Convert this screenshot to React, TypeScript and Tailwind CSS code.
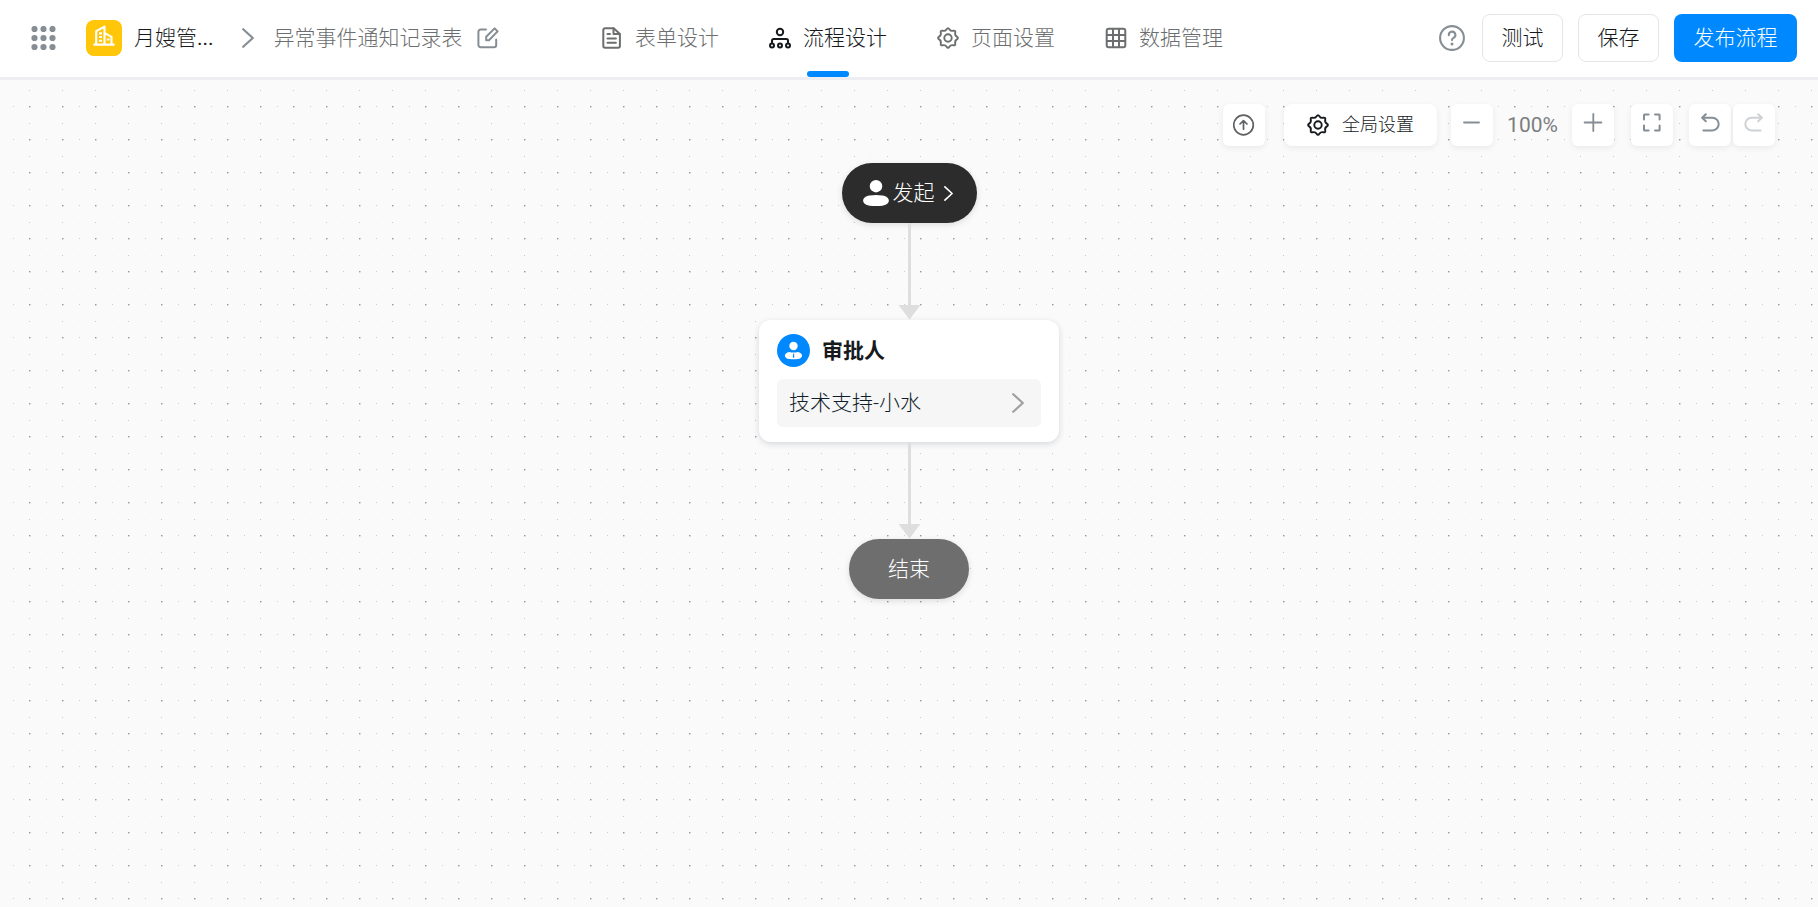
import React from 'react';

interface IconProps {
  className?: string;
}

const strokeProps = {
  fill: 'none',
  stroke: 'currentColor',
  strokeLinecap: 'round' as const,
  strokeLinejoin: 'round' as const,
};

// Eight-tooth gear outline: smooth curve through alternating outer and inner radii
function buildGearPath(center: number, outer: number, inner: number) {
  const points = Array.from({ length: 16 }, (_, i) => {
    const angle = (i * Math.PI) / 8;
    const radius = i % 2 === 0 ? outer : inner;
    return [center + radius * Math.sin(angle), center - radius * Math.cos(angle)];
  });
  const middles = points.map(([x, y], i) => {
    const [nextX, nextY] = points[(i + 1) % points.length];
    return `${((x + nextX) / 2).toFixed(2)} ${((y + nextY) / 2).toFixed(2)}`;
  });
  const curves = points.map(([x, y], i) => `Q${x.toFixed(2)} ${y.toFixed(2)} ${middles[i]}`);
  return `M${middles[15]}${curves.join('')}Z`;
}

const GEAR_PATH = buildGearPath(11, 11, 7.2);

function AppsIcon({ className }: IconProps) {
  const points = [3.5, 12.5, 21.5];
  return (
    <svg viewBox="0 0 25 25" className={className} fill="currentColor">
      {points.map((y) => points.map((x) => <circle key={`${x}-${y}`} cx={x} cy={y - 0.5} r="3.1" />))}
    </svg>
  );
}

function BuildingIcon({ className }: IconProps) {
  return (
    <svg viewBox="0 0 22 22" className={className} {...strokeProps} strokeWidth="2.1">
      <path d="M1.2 19.6H20.8M3.2 19.6V6.2L11.5 1.6V19.6M11.8 8.2L18.5 11.8V19.6" />
      <path d="M6 8.4H9M6 12H9M6 15.8H9M13.8 14.5H16.6" strokeLinecap="butt" />
    </svg>
  );
}

function EditIcon({ className }: IconProps) {
  return (
    <svg viewBox="0 0 22 22" className={className} {...strokeProps} strokeWidth="2">
      <path d="M9 2.6H3.6A2.2 2.2 0 0 0 1.4 4.8V18A2.2 2.2 0 0 0 3.6 20.2H17A2.2 2.2 0 0 0 19.2 18V12.5" />
      <path d="M9.2 13.2V9.8L17.6 1.4L20.6 4.4L12 13.2Z" />
    </svg>
  );
}

function FormIcon({ className }: IconProps) {
  return (
    <svg viewBox="0 0 21 22" className={className} {...strokeProps} strokeWidth="2">
      <path d="M3.6 1.2H12.2L18.4 7V19A1.8 1.8 0 0 1 16.6 20.8H3.6A1.8 1.8 0 0 1 1.8 19V3A1.8 1.8 0 0 1 3.6 1.2Z" />
      <path d="M12 1.5V7H18" />
      <path d="M6 7H8.5M6 11.5H14.4M6 15.8H14.4" />
    </svg>
  );
}

function FlowIcon({ className }: IconProps) {
  return (
    <svg viewBox="0 0 22 22" className={className} {...strokeProps} strokeWidth="2">
      <circle cx="11" cy="5" r="3.2" />
      <circle cx="3" cy="18.4" r="2" />
      <circle cx="11" cy="18.4" r="2" />
      <circle cx="19" cy="18.4" r="2" />
      <path d="M3 15.6V13.6A1.6 1.6 0 0 1 4.6 12H17.4A1.6 1.6 0 0 1 19 13.6V15.6" />
    </svg>
  );
}

function GearIcon({ className }: IconProps) {
  return (
    <svg viewBox="0 0 22 22" className={className} {...strokeProps} strokeWidth="1.9">
      <path d={GEAR_PATH} />
      <circle cx="11" cy="11" r="3.7" />
    </svg>
  );
}

function TableIcon({ className }: IconProps) {
  return (
    <svg viewBox="0 0 22 22" className={className} {...strokeProps} strokeWidth="2">
      <rect x="1.7" y="1.7" width="18.6" height="18.6" rx="2" />
      <path d="M8 2V20M14 2V20M2 8H20M2 14H20" />
    </svg>
  );
}

function HelpIcon({ className }: IconProps) {
  return (
    <svg viewBox="0 0 26 26" className={className} {...strokeProps} strokeWidth="2.1">
      <circle cx="13" cy="13" r="11.9" />
      <path d="M9.8 10.2A3.3 3.3 0 1 1 14.6 12.9C13.5 13.5 13 14 13 15.1" />
      <circle cx="13" cy="19" r="1.5" fill="currentColor" stroke="none" />
    </svg>
  );
}

function ChevronIcon({ className }: IconProps) {
  return (
    <svg viewBox="0 0 12 20" className={className} {...strokeProps} strokeWidth="2.2">
      <path d="M1.2 1.2L10.8 10L1.2 18.8" />
    </svg>
  );
}

function UploadIcon({ className }: IconProps) {
  return (
    <svg viewBox="0 0 22 22" className={className} {...strokeProps} strokeWidth="1.7">
      <circle cx="10.5" cy="11" r="9.8" />
      <path d="M10.5 15.2V7M7 10L10.5 6.6L14 10" />
    </svg>
  );
}

function MinusIcon({ className }: IconProps) {
  return (
    <svg viewBox="0 0 20 20" className={className} {...strokeProps} strokeWidth="1.8">
      <path d="M2 9.5H17" />
    </svg>
  );
}

function PlusIcon({ className }: IconProps) {
  return (
    <svg viewBox="0 0 20 20" className={className} {...strokeProps} strokeWidth="1.8">
      <path d="M1.6 9.5H18.4M10.3 1V18" />
    </svg>
  );
}

function FullscreenIcon({ className }: IconProps) {
  return (
    <svg viewBox="0 0 20 20" className={className} {...strokeProps} strokeWidth="2">
      <path d="M2 6.6V2.2Q2 1.6 2.6 1.6H6.6M13 1.6H17Q17.6 1.6 17.6 2.2V6.6M17.6 12.6V17Q17.6 17.6 17 17.6H13M6.6 17.6H2.6Q2 17.6 2 17V12.6" />
    </svg>
  );
}

function UndoIcon({ className }: IconProps) {
  return (
    <svg viewBox="0 0 20 20" className={className} {...strokeProps} strokeWidth="2">
      <path d="M5.8 1.2L2.2 4.8L5.8 8.2" />
      <path d="M2.6 4.8H12.4A6.3 6.3 0 0 1 12.4 17.4H3.4" />
    </svg>
  );
}

function UserIcon({ className }: IconProps) {
  return (
    <svg viewBox="0 0 26 26" className={className} fill="currentColor">
      <circle cx="13" cy="6.2" r="6.2" />
      <path d="M6.5 15.4Q13 14.4 19.5 15.4C28 16.6 28 24.6 19.5 25.7Q13 26.3 6.5 25.7C-2 24.6 -2 16.6 6.5 15.4Z" />
    </svg>
  );
}

function ApproverIcon({ className }: IconProps) {
  return (
    <svg viewBox="0 0 33 33" className={className}>
      <circle cx="16.5" cy="16.5" r="16.5" fill="#0089ff" />
      <circle cx="16.5" cy="12" r="4.2" fill="#fff" />
      <path d="M12.3 17.9Q16.5 19.2 20.7 17.9C26.6 18.8 26.6 24.3 20.7 25Q16.5 25.5 12.3 25C6.4 24.3 6.4 18.8 12.3 17.9Z" fill="#fff" />
      <path d="M15.8 19.8H17.4L17 21L17.4 23L16.6 24L15.8 23L16.2 21Z" fill="#0089ff" />
    </svg>
  );
}

function DotGrid() {
  return (
    <svg className="absolute inset-0 h-full w-full" aria-hidden="true">
      <defs>
        <pattern id="dots" width="33" height="33" patternUnits="userSpaceOnUse">
          <rect x="29" y="26" width="1" height="1" fill="#9497ab" />
          <rect x="30" y="26" width="1" height="1" fill="#c9cad6" />
          <rect x="29" y="27" width="1" height="1" fill="#d2d3dc" />
          <rect x="30" y="27" width="1" height="1" fill="#e8e9ef" />
          <rect x="13" y="26" width="1" height="1" fill="#cdced4" />
          <rect x="29" y="10" width="1" height="1" fill="#c6c7cd" />
          <rect x="13" y="10" width="1" height="1" fill="#f0f0f2" />
        </pattern>
      </defs>
      <rect width="100%" height="100%" fill="url(#dots)" />
    </svg>
  );
}

function Arrow() {
  return (
    <svg viewBox="0 0 24 97" className="h-[97px] w-6" fill="#dedede">
      <rect x="11" y="0" width="3" height="84" />
      <path d="M1.5 82H23.5L12.5 96.5Z" />
    </svg>
  );
}

interface ToolButtonProps {
  label: string;
  disabled?: boolean;
  className?: string;
  children: React.ReactNode;
}

function ToolButton({ label, disabled, className = '', children }: ToolButtonProps) {
  return (
    <button
      type="button"
      aria-label={label}
      disabled={disabled}
      className={`flex size-[42px] items-center justify-center rounded-md bg-white shadow-[0_2px_6px_rgba(0,0,0,0.07)] ${className}`}
    >
      {children}
    </button>
  );
}

const tabs = [
  { label: '表单设计', icon: FormIcon },
  { label: '流程设计', icon: FlowIcon, active: true },
  { label: '页面设置', icon: GearIcon },
  { label: '数据管理', icon: TableIcon },
];

function Header() {
  return (
    <header className="grid h-20 grid-cols-[1fr_auto_1fr] items-center border-b-3 border-[#ededf2] bg-white pr-[21px] pl-[31px]">
      <div className="flex items-center pb-px whitespace-nowrap">
        <button type="button" aria-label="应用" className="text-[#868e95]">
          <AppsIcon className="size-[25px]" />
        </button>
        <span className="ml-[30px] flex size-9 items-center justify-center rounded-lg bg-[#ffc60a] pb-1 text-white">
          <BuildingIcon className="size-[22px]" />
        </span>
        <a href="#" className="ml-3 text-[#171a1d]">
          月嫂管<span className="font-normal">...</span>
        </a>
        <ChevronIcon className="ml-7 h-5 w-3 text-[#868e95]" />
        <span className="ml-5 text-[#6c6e6f]">异常事件通知记录表</span>
        <button type="button" aria-label="编辑" className="ml-[14px] text-[#868e95]">
          <EditIcon className="size-[22px]" />
        </button>
      </div>

      <nav className="flex h-full gap-[50px] pr-1">
        {tabs.map(({ label, icon: Icon, active }) => (
          <a
            key={label}
            href="#"
            className={`relative flex items-center gap-3 pb-px whitespace-nowrap ${active ? 'text-[#171a1d]' : 'text-[#6c6e6f]'}`}
          >
            <Icon className="size-[22px]" />
            {label}
            {active && (
              <span className="absolute bottom-0 left-1/2 h-[6px] w-[42px] -translate-x-1/2 rounded-full bg-[#0089ff]" />
            )}
          </a>
        ))}
      </nav>

      <div className="flex items-center justify-end pb-px whitespace-nowrap">
        <button type="button" aria-label="帮助" className="mr-[17px] text-[#868e95]">
          <HelpIcon className="size-[26px]" />
        </button>
        <div className="flex gap-[15px]">
          <button type="button" className="h-12 w-[81px] rounded-lg border border-[#e5e6e8] text-[#171a1d]">测试</button>
          <button type="button" className="h-12 w-[81px] rounded-lg border border-[#e5e6e8] text-[#171a1d]">保存</button>
          <button type="button" className="h-12 w-[123px] rounded-lg bg-[#0089ff] text-white">发布流程</button>
        </div>
      </div>
    </header>
  );
}

function Toolbar() {
  return (
    <div className="flex items-center justify-end pr-[43px]">
      <ToolButton label="上传" className="text-[#5f6163]">
        <UploadIcon className="size-[22px]" />
      </ToolButton>
      <button
        type="button"
        className="mr-[14px] ml-[19px] flex h-[42px] w-[153px] items-center justify-center gap-[13px] rounded-lg bg-white text-lg text-[#171a1d] shadow-[0_2px_6px_rgba(0,0,0,0.07)]"
      >
        <GearIcon className="size-[22px]" />
        全局设置
      </button>
      <ToolButton label="缩小" className="pb-1 text-[#868e95]">
        <MinusIcon className="size-5" />
      </ToolButton>
      <span className="w-[79px] text-center font-normal text-[#7c7e80]">100%</span>
      <ToolButton label="放大" className="pb-1 text-[#868e95]">
        <PlusIcon className="size-5" />
      </ToolButton>
      <ToolButton label="全屏" className="ml-[17px] pb-1 text-[#868e95]">
        <FullscreenIcon className="size-5" />
      </ToolButton>
      <div className="ml-4 flex gap-[2px]">
        <ToolButton label="撤销" className="pb-1 text-[#868e95]">
          <UndoIcon className="size-5" />
        </ToolButton>
        <ToolButton label="重做" disabled className="pb-1 text-[#868e95]">
          <UndoIcon className="size-5 -scale-x-100 opacity-40" />
        </ToolButton>
      </div>
    </div>
  );
}

function Flow() {
  return (
    <div className="mt-[17px] flex flex-col items-center">
      <button
        type="button"
        className="flex h-[60px] items-center rounded-full bg-[#2c2c2c] pr-6 pl-[21px] text-white shadow-[0_2px_6px_rgba(0,0,0,0.12)]"
      >
        <UserIcon className="size-[26px]" />
        <span className="ml-1">发起</span>
        <ChevronIcon className="ml-[9px] h-[15px] w-[9px]" />
      </button>
      <Arrow />
      <section className="w-[300px] rounded-xl bg-white px-[18px] pt-[14px] pb-[15px] shadow-[0_2px_6px_rgba(31,45,61,0.16)]">
        <h2 className="flex items-center gap-3 font-bold text-[#171a1d]">
          <ApproverIcon className="size-[33px]" />
          审批人
        </h2>
        <button
          type="button"
          className="mt-3 flex h-12 w-full items-center justify-between rounded-md bg-[#f6f6f6] pr-[17px] pl-3 text-[#111f2c]"
        >
          技术支持-小水
          <ChevronIcon className="h-5 w-3 text-[#a0a0a0]" />
        </button>
      </section>
      <Arrow />
      <div className="flex h-[60px] w-[120px] items-center justify-center rounded-full bg-[#6e6e6e] text-white shadow-[0_2px_6px_rgba(0,0,0,0.12)]">
        结束
      </div>
    </div>
  );
}

export default function App() {
  return (
    <div className="flex min-h-screen flex-col bg-[#fafafa] font-[Roboto,'Noto_Sans_CJK_SC',sans-serif] text-[21px] leading-[30px] font-light">
      <Header />
      <main className="relative flex-1">
        <DotGrid />
        <div className="relative pt-6">
          <Toolbar />
          <Flow />
        </div>
      </main>
    </div>
  );
}
